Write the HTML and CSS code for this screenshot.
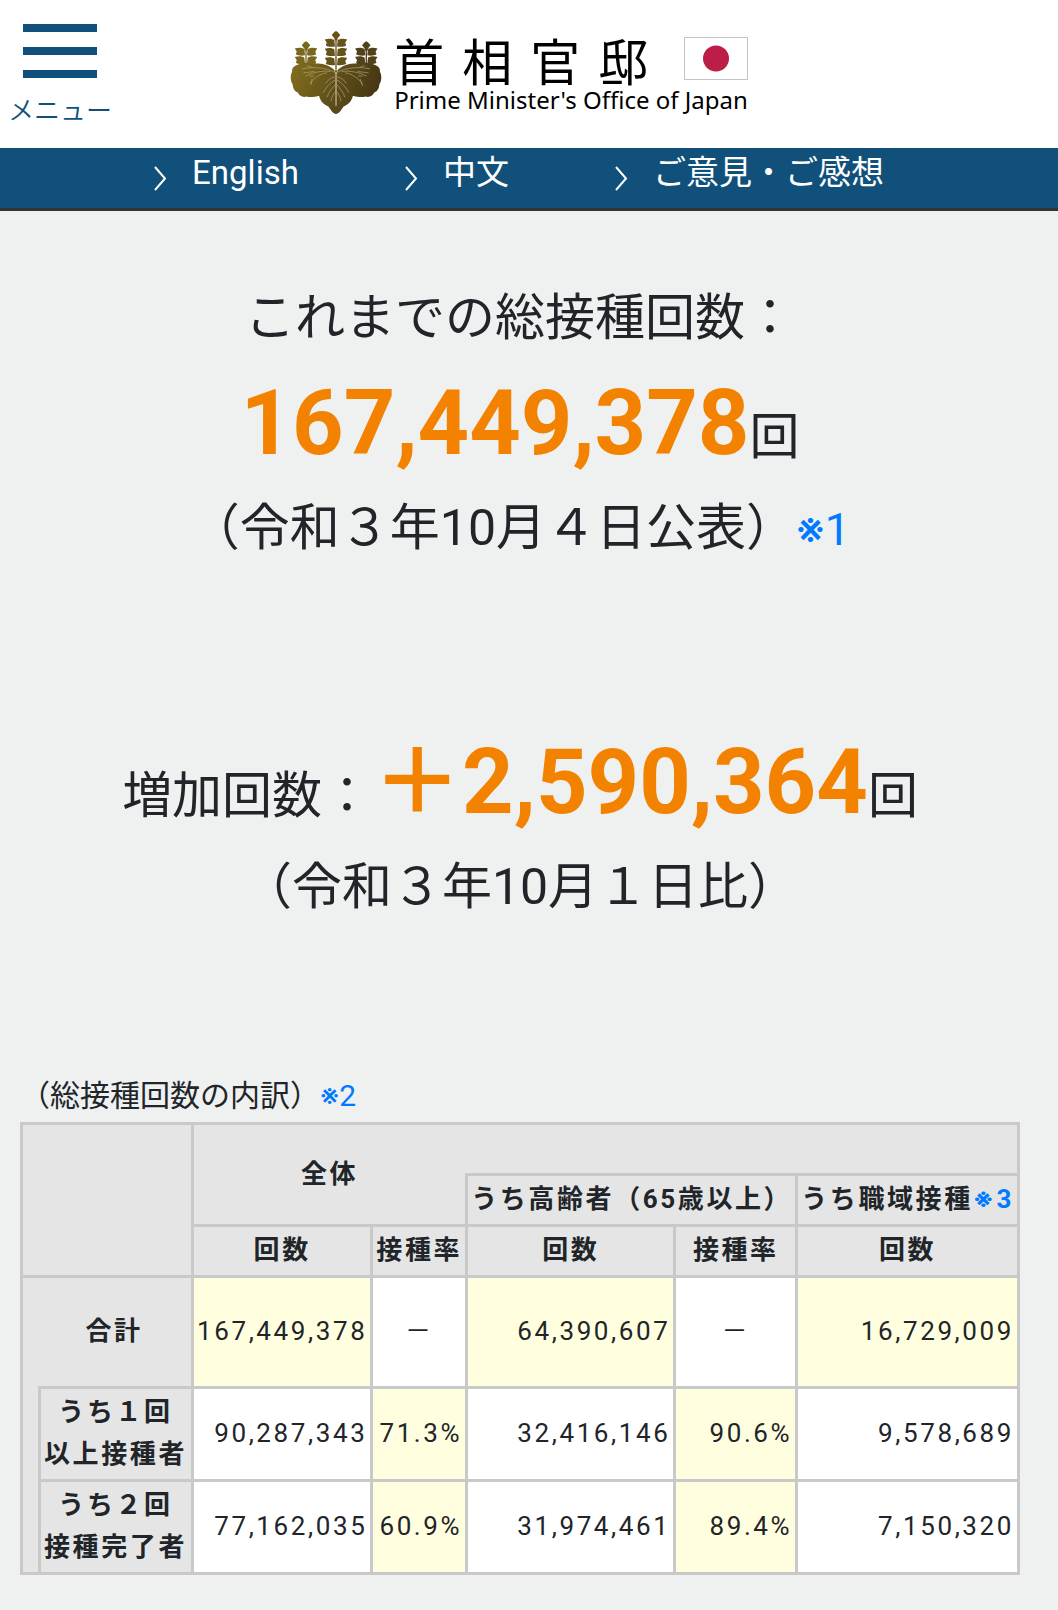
FILE: index.html
```html
<!DOCTYPE html>
<html lang="ja">
<head>
    <meta charset="utf-8">
    <meta name="viewport" content="width=device-width, initial-scale=1">
    <title>首相官邸</title>
    <link rel="stylesheet" href="styles.css">
</head>
<body>

<header class="header">
    <button type="button" class="menu-button">
        <span class="bar"></span>
        <span class="bar"></span>
        <span class="bar"></span>
        <span class="menu-label">メニュー</span>
    </button>

    <a class="logo" href="#">
        <svg class="emblem" viewBox="30 42 278 258" aria-hidden="true">
            <defs>
                <linearGradient id="gold" gradientUnits="userSpaceOnUse" x1="34" y1="120" x2="306" y2="220">
                    <stop offset="0" stop-color="#84701f"/>
                    <stop offset="0.55" stop-color="#5f4e1a"/>
                    <stop offset="1" stop-color="#443512"/>
                </linearGradient>
                <!-- one pair of small leaves on a stem -->
                <path id="pair" d="M-3 12 C-14 15 -28 12 -31 8 L-28 1 L-34 -9 C-24 -13 -10 -12 -5 -7 Z M3 12 C14 15 28 12 31 8 L28 1 L34 -9 C24 -13 10 -12 5 -7 Z"/>
                <path id="bud" d="M0 -14 L5 -11 L13 -2 L5 8 L4 15 L-4 15 L-5 8 L-13 -2 L-5 -11 Z"/>
            </defs>
            <g fill="url(#gold)">
                <path d="M169 168 C150 148 128 144 108 144 C96 138 66 141 50 148 C40 152 34 158 36 168 C29 180 31 198 37 206 C39 222 44 228 53 232 C59 244 68 247 80 244 C92 248 104 244 116 242 L169 240 Z"/>
                <path d="M169 168 C188 148 210 144 230 144 C242 138 272 141 288 148 C298 152 304 158 302 168 C309 180 307 198 301 206 C299 222 294 228 285 232 C279 244 270 247 258 244 C246 248 234 244 222 242 L169 240 Z"/>
                <path d="M169 168 C158 174 138 168 126 180 C114 188 114 198 110 208 C106 222 110 234 118 242 C121 258 132 268 146 274 C154 286 160 296 169 297 C178 296 184 286 192 274 C206 268 217 258 220 242 C228 234 232 222 228 208 C224 198 224 188 212 180 C200 168 180 174 169 168 Z"/>
            </g>
            <g fill="#655319">
                <use href="#bud" x="169" y="59"/>
                <use href="#pair" x="169" y="80"/>
                <use href="#pair" x="169" y="108"/>
                <use href="#pair" x="169" y="136"/>
                <path d="M167 70 h4 v98 h-4 Z"/>
            </g>
            <g fill="#79671e">
                <use href="#bud" x="78" y="90"/>
                <use href="#pair" x="78" y="107"/>
                <use href="#pair" x="78" y="133"/>
                <path d="M76 100 h4 v44 h-4 Z"/>
            </g>
            <g fill="#51421a">
                <use href="#bud" x="261" y="90"/>
                <use href="#pair" x="261" y="107"/>
                <use href="#pair" x="261" y="133"/>
                <path d="M259 100 h4 v44 h-4 Z"/>
            </g>
            <g fill="none" stroke="#b3a678" stroke-width="2">
                <path d="M169 172 V272" stroke="#ddd6bb" stroke-width="3"/>
                <path d="M165 184 C154 186 142 196 138 204 M166 194 C152 202 138 216 130 232 M167 208 C156 220 146 232 142 246 M168 228 C160 238 156 246 154 258"/>
                <path d="M173 184 C184 186 196 196 200 204 M172 194 C186 202 200 216 208 232 M171 208 C182 220 192 232 196 246 M170 228 C178 238 182 246 184 258"/>
                <path d="M162 168 C140 158 100 152 66 160 M152 168 C126 164 96 172 76 182 M142 172 C120 174 100 190 88 206 M98 156 L82 150 M104 168 L70 172 M102 182 L88 182 M96 190 L94 208"/>
                <path d="M176 168 C198 158 238 152 272 160 M186 168 C212 164 242 172 262 182 M196 172 C218 174 238 190 250 206 M240 156 L256 150 M234 168 L268 172 M236 182 L250 182 M242 190 L250 212"/>
            </g>
            <circle cx="169" cy="168" r="5" fill="#6b5a22" stroke="#e4dfca" stroke-width="2"/>
        </svg>
        <span class="logo-text">
            <span class="logo-top">
                <span class="logo-ja">首相官邸</span>
                <svg class="flag" viewBox="0 0 64 43" aria-hidden="true">
                    <rect x="0.5" y="0.5" width="63" height="42" fill="#fff" stroke="#c4c4c4"/>
                    <circle cx="32" cy="21.5" r="13" fill="#bc1e48"/>
                </svg>
            </span>
            <span class="logo-en">Prime Minister's Office of Japan</span>
        </span>
    </a>
</header>

<nav class="nav">
    <a href="#"><svg class="arrow" viewBox="0 0 13 25" aria-hidden="true"><path d="M1 1 L11 12.5 L1 24"/></svg>English</a>
    <a href="#"><svg class="arrow" viewBox="0 0 13 25" aria-hidden="true"><path d="M1 1 L11 12.5 L1 24"/></svg>中文</a>
    <a href="#"><svg class="arrow" viewBox="0 0 13 25" aria-hidden="true"><path d="M1 1 L11 12.5 L1 24"/></svg>ご意見・ご感想</a>
</nav>

<main class="content">
    <p class="count">
        これまでの総接種回数：<br>
        <span class="number">167,449,378</span>回<br>
        （令和３年10月４日公表）<a class="note" href="#note1">※1</a>
    </p>

    <p class="count">
        増加回数：<span class="number">＋2,590,364</span>回<br>
        （令和３年10月１日比）
    </p>

    <p class="caption" id="breakdown">（総接種回数の内訳）<a href="#note2">※2</a></p>
    <table class="breakdown" aria-labelledby="breakdown">
        <thead>
            <tr>
                <th colspan="2" rowspan="3"></th>
                <th colspan="2" rowspan="2" class="open-right">全体</th>
                <th colspan="3" class="open-left"></th>
            </tr>
            <tr>
                <th colspan="2">うち高齢者（65歳以上）</th>
                <th>うち職域接種<a href="#note3">※3</a></th>
            </tr>
            <tr>
                <th>回数</th>
                <th>接種率</th>
                <th>回数</th>
                <th>接種率</th>
                <th>回数</th>
            </tr>
        </thead>
        <tbody>
            <tr class="total">
                <th colspan="2" class="open-bottom">合計</th>
                <td class="mark">167,449,378</td>
                <td class="none">－</td>
                <td class="mark">64,390,607</td>
                <td class="none">－</td>
                <td class="mark">16,729,009</td>
            </tr>
            <tr>
                <th rowspan="2" class="indent"></th>
                <th>うち１回<br>以上接種者</th>
                <td>90,287,343</td>
                <td class="mark">71.3%</td>
                <td>32,416,146</td>
                <td class="mark">90.6%</td>
                <td>9,578,689</td>
            </tr>
            <tr>
                <th>うち２回<br>接種完了者</th>
                <td>77,162,035</td>
                <td class="mark">60.9%</td>
                <td>31,974,461</td>
                <td class="mark">89.4%</td>
                <td>7,150,320</td>
            </tr>
        </tbody>
    </table>
</main>

</body>
</html>
```
FILE: styles.css
```css
* {
    box-sizing: border-box;
}
body {
    margin: 0;
    background-color: #eff1f1;
    color: #212529;
    font-family: Roboto, "Noto Sans CJK JP", sans-serif;
}
a {
    color: #007bff;
    text-decoration: none;
}

/* header */
.header {
    display: grid;
    grid-template-columns: 1fr auto 1fr;
    align-items: start;
    min-height: 148px;
    padding-right: 20px;
    background-color: #fff;
}
.menu-button {
    display: flex;
    flex-direction: column;
    align-items: center;
    gap: 15px;
    width: 120px;
    padding: 24px 0 0;
    border: none;
    background: none;
    color: #10507a;
    font-family: "Noto Sans CJK JP", sans-serif;
    font-size: 26px;
    font-weight: 350;
    line-height: 32px;
    cursor: pointer;
}
.bar {
    width: 74px;
    height: 8px;
    background-color: #10507a;
}
.menu-label {
    white-space: nowrap;
}
.logo {
    display: flex;
    gap: 12px;
    padding-top: 30px;
    color: #000;
}
.emblem {
    width: 92px;
    height: 85px;
}
.logo-text {
    display: flex;
    flex-direction: column;
}
.logo-top {
    display: flex;
    justify-content: space-between;
    align-items: center;
    height: 57px;
}
.logo-ja {
    font-family: "Noto Sans CJK JP", sans-serif;
    font-size: 50px;
    letter-spacing: 18px;
    line-height: 56px;
}
.flag {
    width: 64px;
    height: 43px;
}
.logo-en {
    font-family: "Noto Sans", sans-serif;
    font-size: 24px;
    line-height: 26px;
}

/* links under the header */
.nav {
    display: flex;
    justify-content: center;
    gap: 106px;
    height: 63px;
    padding-right: 20px;
    border-bottom: 3px solid #333;
    background-color: #10507a;
}
.nav a {
    display: flex;
    gap: 25px;
    color: #fff;
    font-size: 33px;
    line-height: 50px;
    white-space: nowrap;
}
.arrow {
    width: 13px;
    height: 25px;
    margin-top: 18px;
    fill: none;
    stroke: #fff;
    stroke-width: 2;
}

/* main figures */
.content {
    padding: 70px 38px 32px 20px;
}
.count {
    margin: 0 0 148px;
    font-size: 50px;
    line-height: 75px;
    text-align: center;
}
.number {
    color: #f38200;
    font-size: 90px;
    font-weight: bold;
    line-height: 135px;
}
.note {
    font-size: 45px;
}
.caption {
    margin: 0 0 4px;
    font-size: 30px;
    line-height: 45px;
}
.note,
.caption a,
.breakdown a {
    font-family: Roboto, Inter, "Noto Sans CJK JP", sans-serif;
}

/* breakdown table */
.breakdown {
    border-collapse: collapse;
    font-size: 26px;
    letter-spacing: 0.1em;
    line-height: 42px;
    white-space: nowrap;
}
.breakdown th,
.breakdown td {
    height: 51px;
    padding: 2px 3px 4px;
    border: 3px solid #c9c9c9;
}
.breakdown th {
    background-color: #e5e5e5;
    text-align: center;
}
.breakdown tbody th {
    padding-right: 4px;
}
.breakdown td {
    background-color: #fff;
    text-align: right;
}
.breakdown .mark {
    background-color: #ffffdf;
}
.breakdown .none {
    text-align: center;
}
.breakdown .total td {
    height: 111px;
}
.breakdown .open-right {
    border-right: none;
}
.breakdown .open-left {
    border-left: none;
}
.breakdown .open-bottom {
    padding-left: 18px;
    border-bottom: none;
}
.breakdown .indent {
    width: 18px;
    border-top: none;
}
```
